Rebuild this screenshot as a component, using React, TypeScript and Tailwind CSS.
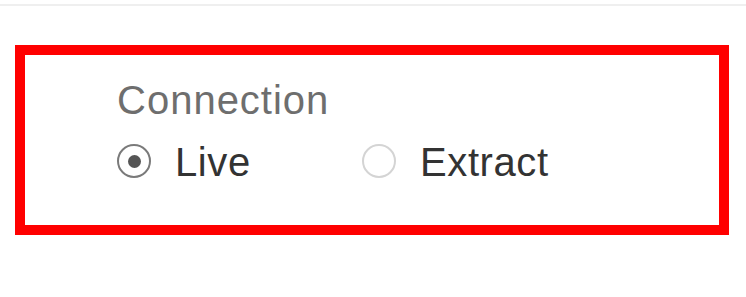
const OPTIONS = [
  { label: 'Live', checked: true },
  { label: 'Extract', checked: false },
];

function Radio({ checked }: { checked: boolean }) {
  return (
    <span
      className={`flex h-[34px] w-[34px] shrink-0 items-center justify-center rounded-full border-2 ${
        checked ? 'border-[#7a7a7a]' : 'border-[#d4d4d4]'
      }`}
    >
      {checked && <span className="h-[13px] w-[13px] rounded-full bg-[#555555]" />}
    </span>
  );
}

export default function App() {
  return (
    <div className="h-[297px] w-[746px] bg-white font-['Liberation_Sans',Arial,sans-serif]">
      <div className="pt-[4px]">
        <div className="h-[2px] bg-[#efefef]" />
      </div>
      <div className="ml-[15px] mt-[39px] h-[190px] w-[714px] border-[10px] border-[#ff0000] pl-[92px] pt-[22px]">
        <div className="text-[40px] leading-[46px] tracking-[1px] text-[#6e6e6e]">Connection</div>
        <div className="mt-[14px] flex items-center">
          {OPTIONS.map(o => (
            <label key={o.label} className="flex w-[245px] items-center gap-[24px]">
              <Radio checked={o.checked} />
              <span className="pt-[2px] text-[40px] leading-[46px] tracking-[0.6px] text-[#333333]">{o.label}</span>
            </label>
          ))}
        </div>
      </div>
    </div>
  );
}
